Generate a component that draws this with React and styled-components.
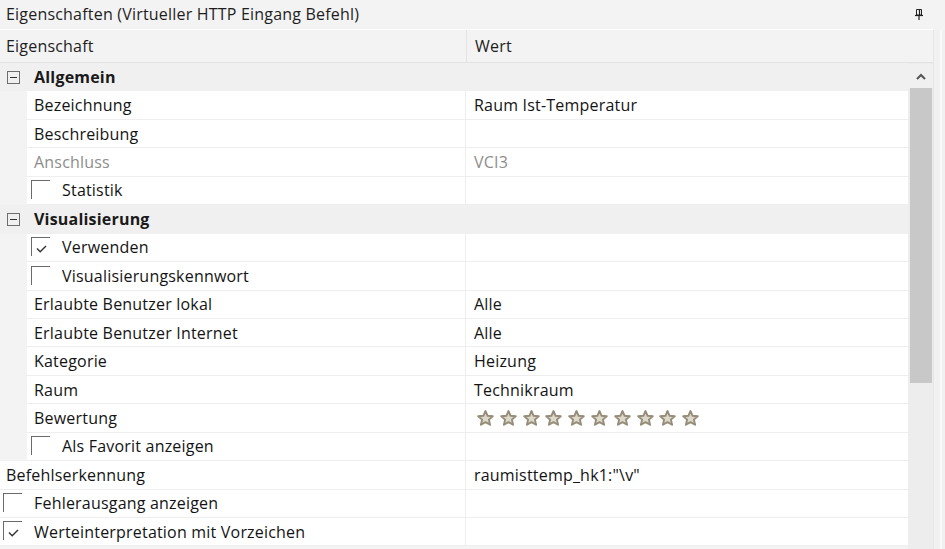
import React from "react";
import styled, { createGlobalStyle } from "styled-components";

const Global = createGlobalStyle`
  html, body { margin: 0; padding: 0; background: #f3f3f3; }
  * { box-sizing: border-box; }
`;

const ROW_H = 28.44;

const Frame = styled.div`
  width: 945px;
  height: 549px;
  overflow: hidden;
  background: #f3f3f3;
  font-family: "Open Sans", "Noto Sans", sans-serif;
  font-size: 16px;
  letter-spacing: 0.2px;
  color: #141414;
  display: flex;
  flex-direction: column;
`;

const TitleBar = styled.div`
  height: 29px;
  flex: none;
  display: flex;
  align-items: center;
  justify-content: space-between;
  padding: 0 22px 1px 6px;
  color: #1e1e1e;
`;

const Body = styled.div`
  flex: 1;
  display: flex;
  min-height: 0;
`;

const GridArea = styled.div`
  width: 933px;
  display: flex;
  flex-direction: column;
  min-height: 0;
`;

const RightStrip = styled.div`
  flex: 1;
  margin-top: 1px;
  border-left: 1px solid #e6e6e6;
  background: #f1f1f1;
  display: flex;
  justify-content: flex-end;
`;

const StripLine = styled.div`
  width: 2px;
  margin-right: 3px;
  background: #fafafa;
`;

const Header = styled.div`
  height: 34px;
  flex: none;
  display: flex;
  border-top: 1px solid #ffffff;
  border-bottom: 1px solid #e2e2e2;
  background: #f3f3f3;
`;

const HeaderCell = styled.div`
  width: ${(p) => p.$w || "auto"};
  flex: ${(p) => (p.$w ? "none" : "1")};
  display: flex;
  align-items: center;
  padding-left: ${(p) => p.$pad}px;
  border-right: ${(p) => (p.$divider ? "1px solid #e3e3e3" : "none")};
  color: #1e1e1e;
`;

const Content = styled.div`
  flex: 1;
  display: flex;
  min-height: 0;
`;

const Rows = styled.div`
  width: 908px;
  display: flex;
  flex-direction: column;
  background: #f3f3f3;
`;

const Row = styled.div`
  height: ${ROW_H}px;
  flex: none;
  display: flex;
  background: ${(p) => (p.$category ? "#f0f0f0" : "#f3f3f3")};
`;

const Gutter = styled.div`
  width: ${(p) => p.$w}px;
  flex: none;
  display: flex;
  align-items: center;
  padding-left: 7px;
`;

const Cells = styled.div`
  flex: 1;
  display: flex;
  background: #ffffff;
  border-bottom: 1px solid #eeeeee;
`;

const NameCell = styled.div`
  width: ${(p) => p.$w}px;
  flex: none;
  display: flex;
  align-items: center;
  gap: 12px;
  padding-left: ${(p) => p.$pad}px;
  border-right: 1px solid #eeeeee;
  color: ${(p) => (p.$disabled ? "#8d8d8d" : "#141414")};
  white-space: nowrap;
`;

const ValueCell = styled.div`
  flex: 1;
  display: flex;
  align-items: center;
  padding-left: 8px;
  color: ${(p) => (p.$disabled ? "#8d8d8d" : "#141414")};
  white-space: nowrap;
`;

const CategoryLabel = styled.div`
  display: flex;
  align-items: center;
  font-weight: 700;
  padding-left: 7px;
  color: #1a1a1a;
`;

const Scrollbar = styled.div`
  width: 25px;
  display: flex;
  flex-direction: column;
  align-items: center;
  background: #ededed;
  padding-top: 1px;
`;

const ArrowBtn = styled.div`
  height: 24px;
  width: 100%;
  display: flex;
  align-items: center;
  justify-content: center;
  background: #f0f0f0;
`;

const Thumb = styled.div`
  width: 22px;
  height: 295px;
  background: #c8c8c8;
`;

const Stars = styled.div`
  display: flex;
  gap: 5.8px;
  padding-left: 3px;
`;

const Box = styled.span`
  width: 19px;
  height: 19px;
  flex: none;
  align-self: flex-end;
  margin-bottom: 5px;
  border-top: 1.5px solid #6a6a6a;
  border-left: 1.5px solid #6a6a6a;
  display: flex;
  align-items: flex-start;
  padding: 7px 0 0 4px;
`;

const Check = ({ checked }) => (
  <Box>
    {checked && (
      <svg width="11" height="8" viewBox="0 0 11 8">
        <path d="M1 3.5 L4.2 6.8 L10 1" fill="none" stroke="#333" strokeWidth="1.4" />
      </svg>
    )}
  </Box>
);

const Minus = () => (
  <svg width="13" height="13" viewBox="0 0 13 13">
    <rect x="0.5" y="0.5" width="12" height="12" fill="none" stroke="#6e6e6e" />
    <path d="M3 6.5 H10" stroke="#333" strokeWidth="1" />
  </svg>
);

const Pin = () => (
  <svg width="8" height="11" viewBox="0 0 8 11">
    <path d="M1.5 0.5 H6.5 V6 H1.5 Z" fill="none" stroke="#222" strokeWidth="1" />
    <path d="M4.5 1 V6" stroke="#222" strokeWidth="1.2" />
    <path d="M0 6.5 H8" stroke="#222" strokeWidth="1.2" />
    <path d="M4 7 V11" stroke="#222" strokeWidth="1.2" />
  </svg>
);

const Star = () => (
  <svg width="17" height="16" viewBox="0 0 17 16">
    <path
      d="M8.5 1 L10.6 5.8 L15.8 6.2 L11.9 9.6 L13.1 14.8 L8.5 12.1 L3.9 14.8 L5.1 9.6 L1.2 6.2 L6.4 5.8 Z"
      fill="#ddd8ca"
      stroke="#958d7a"
      strokeWidth="1.9"
      strokeLinejoin="round"
    />
  </svg>
);

const ChevronUp = () => (
  <svg width="10" height="7" viewBox="0 0 10 7">
    <path d="M1 6 L5 2 L9 6" fill="none" stroke="#555" strokeWidth="2" />
  </svg>
);

const data = [
  { type: "cat", label: "Allgemein" },
  { name: "Bezeichnung", value: "Raum Ist-Temperatur", nested: true },
  { name: "Beschreibung", value: "", nested: true },
  { name: "Anschluss", value: "VCI3", nested: true, disabled: true },
  { name: "Statistik", check: false, nested: true },
  { type: "cat", label: "Visualisierung" },
  { name: "Verwenden", check: true, nested: true },
  { name: "Visualisierungskennwort", check: false, nested: true },
  { name: "Erlaubte Benutzer lokal", value: "Alle", nested: true },
  { name: "Erlaubte Benutzer Internet", value: "Alle", nested: true },
  { name: "Kategorie", value: "Heizung", nested: true },
  { name: "Raum", value: "Technikraum", nested: true },
  { name: "Bewertung", stars: 10, nested: true },
  { name: "Als Favorit anzeigen", check: false, nested: true },
  { name: "Befehlserkennung", value: 'raumisttemp_hk1:"\\v"' },
  { name: "Fehlerausgang anzeigen", check: false },
  { name: "Werteinterpretation mit Vorzeichen", check: true },
];

const DIVIDER_X = 466;

function PropRow({ r }) {
  if (r.type === "cat") {
    return (
      <Row $category>
        <Gutter $w={27}>
          <Minus />
        </Gutter>
        <CategoryLabel>{r.label}</CategoryLabel>
      </Row>
    );
  }
  const indent = r.nested ? 27 : 0;
  const pad = r.check !== undefined ? (r.nested ? 4 : 3) : r.nested ? 7 : 6;
  return (
    <Row>
      {r.nested && <Gutter $w={27} />}
      <Cells>
        <NameCell $w={DIVIDER_X - indent} $pad={pad} $disabled={r.disabled}>
          {r.check !== undefined && <Check checked={r.check} />}
          <span>{r.name}</span>
        </NameCell>
        <ValueCell $disabled={r.disabled}>
          {r.stars ? (
            <Stars>
              {Array.from({ length: r.stars }).map((_, i) => (
                <Star key={i} />
              ))}
            </Stars>
          ) : (
            r.value
          )}
        </ValueCell>
      </Cells>
    </Row>
  );
}

export default function App() {
  return (
    <>
      <Global />
      <Frame>
        <TitleBar>
          <span>Eigenschaften (Virtueller HTTP Eingang Befehl)</span>
          <Pin />
        </TitleBar>
        <Body>
          <GridArea>
            <Header>
              <HeaderCell $w={`${DIVIDER_X + 1}px`} $pad={6} $divider>
                Eigenschaft
              </HeaderCell>
              <HeaderCell $pad={8}>Wert</HeaderCell>
            </Header>
            <Content>
              <Rows>
                {data.map((r, i) => (
                  <PropRow key={i} r={r} />
                ))}
              </Rows>
              <Scrollbar>
                <ArrowBtn>
                  <ChevronUp />
                </ArrowBtn>
                <Thumb />
              </Scrollbar>
            </Content>
          </GridArea>
          <RightStrip>
            <StripLine />
          </RightStrip>
        </Body>
      </Frame>
    </>
  );
}
